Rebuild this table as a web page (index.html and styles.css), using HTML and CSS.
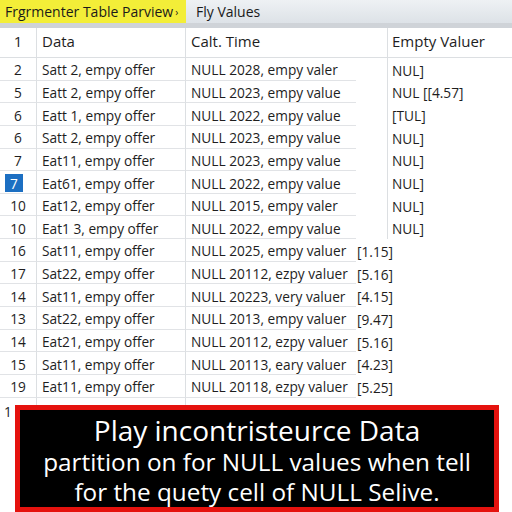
FILE: index.html
```html
<!DOCTYPE html>
<html>
<head>
<meta charset="utf-8">
<link rel="stylesheet" href="styles.css">
</head>
<body>
<div class="page">
  <div class="tabs">
    <div class="tab tab-active">Frgrmenter Table Parview<span class="tab-dot">›</span></div>
    <div class="tab tab-other">Fly Values</div>
  </div>
  <div class="grid">
    <div class="c num head">1</div><div class="c data head">Data</div><div class="c time head">Calt. Time</div><div class="c gap head"></div><div class="c val head">Empty Valuer</div>

    <div class="c num">2</div><div class="c data">Satt 2, empy offer</div><div class="c time">NULL 2028, empy valer</div><div class="c gap"></div><div class="c val">NUL]</div>
    <div class="c num">5</div><div class="c data">Eatt 2, empy offer</div><div class="c time">NULL 2023, empy value</div><div class="c gap"></div><div class="c val">NUL [[4.57]</div>
    <div class="c num">6</div><div class="c data">Eatt 1, empy offer</div><div class="c time">NULL 2022, empy value</div><div class="c gap"></div><div class="c val">[TUL]</div>
    <div class="c num">6</div><div class="c data">Satt 2, empy offer</div><div class="c time">NULL 2023, empy value</div><div class="c gap"></div><div class="c val">NUL]</div>
    <div class="c num">7</div><div class="c data">Eat11, empy offer</div><div class="c time">NULL 2023, empy value</div><div class="c gap"></div><div class="c val">NUL]</div>
    <div class="c num"><span class="sel">7</span></div><div class="c data">Eat61, empy offer</div><div class="c time">NULL 2022, empy value</div><div class="c gap"></div><div class="c val">NUL]</div>
    <div class="c num">10</div><div class="c data">Eat12, empy offer</div><div class="c time">NULL 2015, empy valer</div><div class="c gap"></div><div class="c val">NUL]</div>
    <div class="c num">10</div><div class="c data">Eat1 3, empy offer</div><div class="c time">NULL 2022, empy value</div><div class="c gap"></div><div class="c val">NUL]</div>

    <div class="c num">16</div><div class="c data">Sat11, empy offer</div><div class="c time">NULL 2025, empy valuer</div><div class="c wide">[1.15]</div>
    <div class="c num">17</div><div class="c data">Sat22, empy offer</div><div class="c time">NULL 20112, ezpy valuer</div><div class="c wide">[5.16]</div>
    <div class="c num">14</div><div class="c data">Sat11, empy offer</div><div class="c time">NULL 20223, very valuer</div><div class="c wide">[4.15]</div>
    <div class="c num">13</div><div class="c data">Sat22, empy offer</div><div class="c time">NULL 2013, empy valuer</div><div class="c wide">[9.47]</div>
    <div class="c num">14</div><div class="c data">Eat21, empy offer</div><div class="c time">NULL 20112, ezpy valuer</div><div class="c wide">[5.16]</div>
    <div class="c num">15</div><div class="c data">Sat11, empy offer</div><div class="c time">NULL 20113, eary valuer</div><div class="c wide">[4.23]</div>
    <div class="c num">19</div><div class="c data">Eat11, empy offer</div><div class="c time">NULL 20118, ezpy valuer</div><div class="c wide">[5.25]</div>
    <div class="c num last">1</div><div class="c data last"></div><div class="c time last"></div>
  </div>
  <div class="overlay">
    <div class="ov-line ov-big">Play incontristeurce Data</div>
    <div class="ov-line">partition on for NULL values when tell</div>
    <div class="ov-line">for the quety cell of NULL Selive.</div>
  </div>
</div>
</body>
</html>
```

FILE: styles.css
```css
html, body {
  margin: 0;
  padding: 0;
  background: #ffffff;
  overflow: hidden;
}
.page {
  position: relative;
  width: 512px;
  height: 512px;
  font-family: "Open Sans", "Noto Sans", sans-serif;
  color: #1e1e1e;
}
.tabs {
  display: flex;
  height: 23px;
  border-bottom: 5px solid #cfd3d8;
  background: linear-gradient(#eef1f4, #dde2e7);
}
.tab {
  display: flex;
  align-items: center;
  font-size: 14px;
  padding: 0 0 0 5px;
}
.tab-active {
  width: 181px;
  background: #f3ee38;
  color: #1a1a1a;
}
.tab-dot {
  font-size: 10px;
  margin-left: 2px;
}
.tab-other {
  padding-left: 10px;
  color: #1a1a1a;
}
.grid {
  display: grid;
  grid-template-columns: 37px 149px 170px 31px 1fr;
  grid-template-rows: 30px;
  grid-auto-rows: 22.65px;
  font-size: 13.7px;
}
.c {
  display: flex;
  align-items: center;
  white-space: nowrap;
  border-bottom: 1px solid #e1e3e6;
  box-sizing: border-box;
  padding-top: 2px;
}
.head {
  font-size: 15px;
  padding-top: 0;
  padding-bottom: 3px;
  border-bottom: 1px solid #dcdfe2;
}
.num {
  justify-content: center;
  border-right: 1px solid #dcdfe2;
}
.data {
  padding-left: 5px;
  border-right: 1px solid #dcdfe2;
}
.time {
  padding-left: 5px;
  overflow: visible;
}
.gap {
  border-bottom: none;
}
.gap.head {
  border-bottom: 1px solid #dcdfe2;
}
.val {
  padding-left: 4px;
  border-left: 1px solid #dcdfe2;
  border-bottom: none;
}
.val.head {
  border-bottom: 1px solid #dcdfe2;
}
.wide {
  grid-column: 4 / 6;
  padding-left: 1px;
  border-bottom: none;
}
.last {
  align-items: flex-start;
  padding-top: 4px;
  border-bottom: none;
}
.num.last {
  justify-content: flex-start;
  padding-left: 4px;
}
.sel {
  display: inline-flex;
  align-items: center;
  justify-content: center;
  width: 18px;
  height: 18px;
  background: #1c6fc2;
  color: #ffffff;
  margin-right: 8px;
}
.overlay {
  position: absolute;
  left: 15px;
  top: 405px;
  width: 484px;
  height: 107px;
  box-sizing: border-box;
  border: 5px solid #e5120e;
  background: #000000;
  color: #ffffff;
  display: flex;
  flex-direction: column;
  align-items: center;
  padding-top: 3px;
  font-weight: 500;
}
.ov-line {
  font-size: 24.3px;
  line-height: 30px;
  white-space: nowrap;
}
.ov-big {
  font-size: 28px;
  line-height: 34px;
}
```
